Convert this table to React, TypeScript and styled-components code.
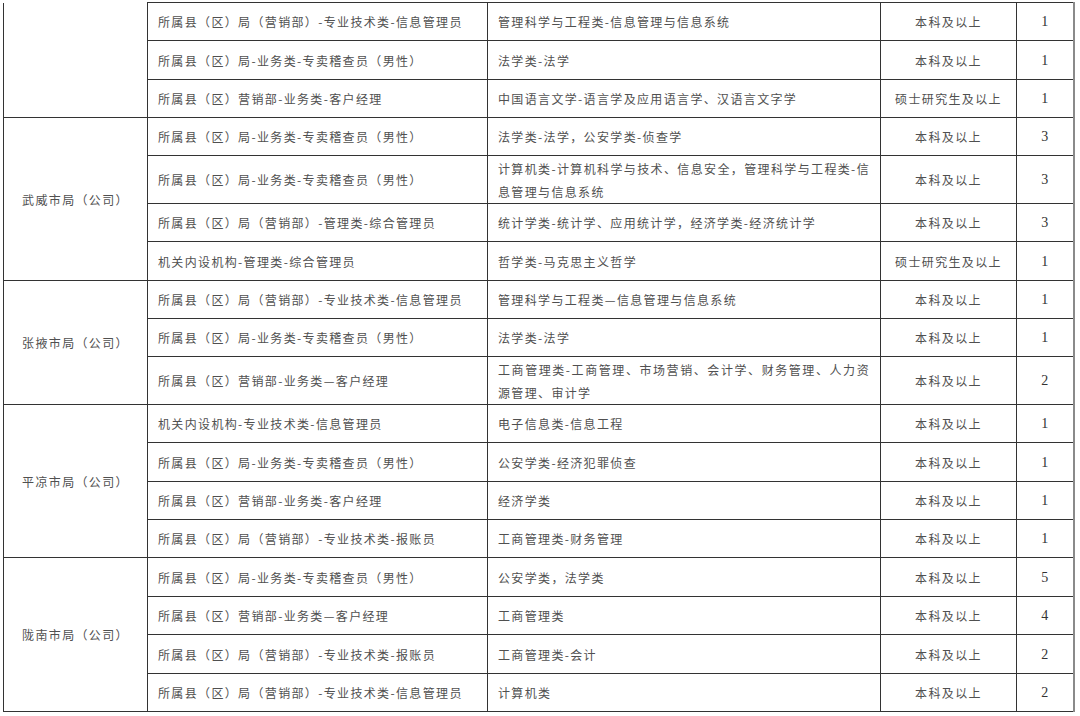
import React from "react";
import styled, { createGlobalStyle } from "styled-components";

const GlobalStyle = createGlobalStyle`
  html, body {
    margin: 0;
    padding: 0;
    background: #ffffff;
  }
  body {
    font-family: "Noto Sans CJK SC", "Liberation Sans", sans-serif;
  }
`;

type Post = {
  position: string;
  major: string[];
  degree: string;
  count: number;
  height: number;
};

type Group = {
  city: string;
  posts: Post[];
};

// 列宽（px）
const columnWidths = [144, 340, 393, 136, 57];

// 第一组是上一页的延续，没有单位名称
const groups: Group[] = [
  {
    city: "",
    posts: [
      {
        position: "所属县（区）局（营销部）-专业技术类-信息管理员",
        major: ["管理科学与工程类-信息管理与信息系统"],
        degree: "本科及以上",
        count: 1,
        height: 38,
      },
      {
        position: "所属县（区）局-业务类-专卖稽查员（男性）",
        major: ["法学类-法学"],
        degree: "本科及以上",
        count: 1,
        height: 39,
      },
      {
        position: "所属县（区）营销部-业务类-客户经理",
        major: ["中国语言文学-语言学及应用语言学、汉语言文字学"],
        degree: "硕士研究生及以上",
        count: 1,
        height: 38,
      },
    ],
  },
  {
    city: "武威市局（公司）",
    posts: [
      {
        position: "所属县（区）局-业务类-专卖稽查员（男性）",
        major: ["法学类-法学，公安学类-侦查学"],
        degree: "本科及以上",
        count: 3,
        height: 38,
      },
      {
        position: "所属县（区）局-业务类-专卖稽查员（男性）",
        major: [
          "计算机类-计算机科学与技术、信息安全，管理科学与工程类-信",
          "息管理与信息系统",
        ],
        degree: "本科及以上",
        count: 3,
        height: 48,
      },
      {
        position: "所属县（区）局（营销部）-管理类-综合管理员",
        major: ["统计学类-统计学、应用统计学，经济学类-经济统计学"],
        degree: "本科及以上",
        count: 3,
        height: 38,
      },
      {
        position: "机关内设机构-管理类-综合管理员",
        major: ["哲学类-马克思主义哲学"],
        degree: "硕士研究生及以上",
        count: 1,
        height: 39,
      },
    ],
  },
  {
    city: "张掖市局（公司）",
    posts: [
      {
        position: "所属县（区）局（营销部）-专业技术类-信息管理员",
        major: ["管理科学与工程类—信息管理与信息系统"],
        degree: "本科及以上",
        count: 1,
        height: 38,
      },
      {
        position: "所属县（区）局-业务类-专卖稽查员（男性）",
        major: ["法学类-法学"],
        degree: "本科及以上",
        count: 1,
        height: 38,
      },
      {
        position: "所属县（区）营销部-业务类—客户经理",
        major: [
          "工商管理类-工商管理、市场营销、会计学、财务管理、人力资",
          "源管理、审计学",
        ],
        degree: "本科及以上",
        count: 2,
        height: 48,
      },
    ],
  },
  {
    city: "平凉市局（公司）",
    posts: [
      {
        position: "机关内设机构-专业技术类-信息管理员",
        major: ["电子信息类-信息工程"],
        degree: "本科及以上",
        count: 1,
        height: 38,
      },
      {
        position: "所属县（区）局-业务类-专卖稽查员（男性）",
        major: ["公安学类-经济犯罪侦查"],
        degree: "本科及以上",
        count: 1,
        height: 39,
      },
      {
        position: "所属县（区）营销部-业务类-客户经理",
        major: ["经济学类"],
        degree: "本科及以上",
        count: 1,
        height: 38,
      },
      {
        position: "所属县（区）局（营销部）-专业技术类-报账员",
        major: ["工商管理类-财务管理"],
        degree: "本科及以上",
        count: 1,
        height: 38,
      },
    ],
  },
  {
    city: "陇南市局（公司）",
    posts: [
      {
        position: "所属县（区）局-业务类-专卖稽查员（男性）",
        major: ["公安学类，法学类"],
        degree: "本科及以上",
        count: 5,
        height: 39,
      },
      {
        position: "所属县（区）营销部-业务类—客户经理",
        major: ["工商管理类"],
        degree: "本科及以上",
        count: 4,
        height: 38,
      },
      {
        position: "所属县（区）局（营销部）-专业技术类-报账员",
        major: ["工商管理类-会计"],
        degree: "本科及以上",
        count: 2,
        height: 39,
      },
      {
        position: "所属县（区）局（营销部）-专业技术类-信息管理员",
        major: ["计算机类"],
        degree: "本科及以上",
        count: 2,
        height: 38,
      },
    ],
  },
];

const App: React.FC = () => {
  return (
    <>
      <GlobalStyle />
      <Page>
        <Table>
          <colgroup>
            {columnWidths.map((w, i) => (
              <Column key={i} $width={w} />
            ))}
          </colgroup>
          <tbody>
            {groups.map((group, gi) =>
              group.posts.map((post, pi) => (
                <Row key={`${gi}-${pi}`} $height={post.height}>
                  {pi === 0 && (
                    <CityCell rowSpan={group.posts.length} $open={!group.city}>
                      {group.city}
                    </CityCell>
                  )}
                  <TextCell>{post.position}</TextCell>
                  <TextCell>
                    {post.major.map((line, li) => (
                      <MajorLine
                        key={li}
                        $justify={li < post.major.length - 1}
                      >
                        {line}
                      </MajorLine>
                    ))}
                  </TextCell>
                  <CenterCell>{post.degree}</CenterCell>
                  <CountCell>{post.count}</CountCell>
                </Row>
              ))
            )}
          </tbody>
        </Table>
      </Page>
    </>
  );
};

export default App;

const Page = styled.div`
  width: 1080px;
  height: 716px;
  overflow: hidden;
  padding: 2px 0 0 3px;
  box-sizing: border-box;
  background: #ffffff;
`;

const Table = styled.table`
  border-collapse: collapse;
  table-layout: fixed;
  width: 1070px;
`;

const Column = styled.col<{ $width: number }>`
  width: ${({ $width }) => $width}px;
`;

const Row = styled.tr<{ $height: number }>`
  height: ${({ $height }) => $height}px;
`;

const Cell = styled.td`
  border: 1px solid #333333;
  padding: 0 10px;
  vertical-align: middle;
  color: #505050;
  font-size: 12px;
  letter-spacing: 1.35px;
  line-height: 23px;
  white-space: nowrap;
  overflow: hidden;
`;

const CityCell = styled(Cell)<{ $open: boolean }>`
  text-align: center;
  border-top: ${({ $open }) => ($open ? "none" : "1px solid #333333")};
`;

const TextCell = styled(Cell)`
  text-align: left;
`;

const MajorLine = styled.span<{ $justify: boolean }>`
  display: block;
  text-align: ${({ $justify }) => ($justify ? "justify" : "left")};
  text-align-last: ${({ $justify }) => ($justify ? "justify" : "left")};
`;

const CenterCell = styled(Cell)`
  text-align: center;
`;

const CountCell = styled(Cell)`
  text-align: center;
  color: #333333;
  font-family: "Liberation Serif", "DejaVu Serif", serif;
  font-size: 14px;
  letter-spacing: 0;
  border-right: 2px solid #8a8a8a;
`;
